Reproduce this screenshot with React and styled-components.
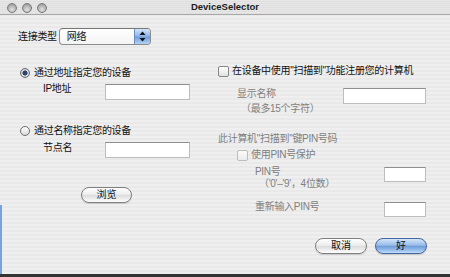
import styled, { createGlobalStyle } from 'styled-components';

const GlobalStyle = createGlobalStyle`
  html, body {
    margin: 0;
    padding: 0;
  }
  body {
    background: #6f9bd6;
    font-family: "Liberation Sans", "Noto Sans CJK SC", sans-serif;
  }
`;

const Window = styled.div`
  width: 450px;
  height: 277px;
  box-sizing: border-box;
  display: flex;
  flex-direction: column;
  overflow: hidden;
  border-bottom: 3px solid #343434;
  background:
    linear-gradient(to bottom, transparent 75%, #78a2da 75%) left top / 2px 100% no-repeat,
    repeating-linear-gradient(to bottom, #efefef 0 2px, #e9e9e9 2px 4px);
`;

const TitleBar = styled.div`
  flex: none;
  height: 14px;
  display: grid;
  grid-template-columns: 1fr auto 1fr;
  align-items: center;
  background: repeating-linear-gradient(to bottom, #e7e7e7 0 1px, #dfdfdf 1px 2px);
  border-bottom: 1px solid #a9a9a9;
`;

const Lights = styled.div`
  display: flex;
  gap: 5px;
  padding-left: 7px;
  padding-top: 2px;
`;

const Light = styled.span`
  width: 10px;
  height: 10px;
  box-sizing: border-box;
  border-radius: 50%;
  border: 1px solid #7a7a7a;
  background: radial-gradient(circle at 50% 70%, #e2e2e2 0, #b3b3b3 55%, #8d8d8d 100%);
`;

const Title = styled.div`
  font-family: "Liberation Sans", sans-serif;
  font-weight: bold;
  font-size: 9.5px;
  line-height: 14px;
  color: #1c1c1c;
`;

const Content = styled.div`
  flex: 1;
  padding: 13px 23px 0 18px;
  display: flex;
  flex-direction: column;
  font-size: 10px;
  letter-spacing: -0.3px;
  color: #111;
`;

const TopRow = styled.div`
  display: flex;
  align-items: center;
  gap: 2px;
  height: 17px;
`;

const Label = styled.span`
  line-height: 12px;
  white-space: nowrap;
  color: ${(p) => (p.$disabled ? '#808080' : '#111')};
`;

const Popup = styled.div`
  width: 92px;
  height: 17px;
  box-sizing: border-box;
  display: flex;
  border: 1px solid #8c8c8c;
  border-top-color: #777;
  border-radius: 4px;
  overflow: hidden;
  background: linear-gradient(to bottom, #ffffff, #f4f4f4);
`;

const PopupValue = styled.span`
  flex: 1;
  padding-left: 7px;
  line-height: 15px;
`;

const Stepper = styled.span`
  width: 15px;
  display: flex;
  align-items: center;
  justify-content: center;
  border-left: 1px solid #6b8cc2;
  background: linear-gradient(to bottom, #d2e4f8 0, #8fb5e7 48%, #6d9bda 52%, #b4d3f5 100%);
`;

const Columns = styled.div`
  display: grid;
  grid-template-columns: 200px 208px;
  margin-top: 18px;
`;

const Column = styled.div`
  display: flex;
  flex-direction: column;
  align-items: flex-start;
  padding-top: ${(p) => p.$pt}px;
`;

const ChoiceRow = styled.div`
  display: flex;
  align-items: center;
  gap: ${(p) => p.$gap ?? 4}px;
  height: 14px;
  margin-top: ${(p) => p.$mt ?? 0}px;
  margin-left: ${(p) => p.$ml ?? 0}px;
`;

const Radio = styled.span`
  width: 10px;
  height: 10px;
  box-sizing: border-box;
  border-radius: 50%;
  border: 1px solid #6e6e6e;
  background: ${(p) =>
    p.$checked
      ? 'radial-gradient(circle, #2f4266 0 2.3px, #dfe4ec 2.8px 3.2px, #aab2bf 4.2px)'
      : 'linear-gradient(to bottom, #ffffff, #d9d9d9)'};
`;

const Checkbox = styled.span`
  width: 11px;
  height: 11px;
  box-sizing: border-box;
  border-radius: 2px;
  border: 1px solid ${(p) => (p.$disabled ? '#bdbdbd' : '#858585')};
  background: ${(p) =>
    p.$disabled
      ? 'linear-gradient(to bottom, #fbfbfb, #ececec)'
      : 'linear-gradient(to bottom, #ffffff, #e1e1e1)'};
`;

const FieldRow = styled.div`
  display: flex;
  align-items: flex-start;
  align-self: stretch;
  margin-top: ${(p) => p.$mt}px;
  margin-left: ${(p) => p.$ml}px;
`;

const FieldLabel = styled.div`
  flex: ${(p) => (p.$w ? 'none' : '1')};
  width: ${(p) => (p.$w ? `${p.$w}px` : 'auto')};
  margin-top: ${(p) => p.$mt ?? 0}px;
  line-height: ${(p) => p.$lh ?? 12}px;
  white-space: nowrap;
  color: ${(p) => (p.$disabled ? '#808080' : '#111')};
`;

const SubLine = styled.div`
  padding-left: 4px;
`;

const TextBox = styled.div`
  flex: none;
  width: ${(p) => p.$w}px;
  height: ${(p) => p.$h}px;
  margin-top: ${(p) => p.$mt ?? 0}px;
  box-sizing: border-box;
  background: #fff;
  border: 1px solid #bdbdbd;
  border-top-color: #8e8e8e;
`;

const Heading = styled.div`
  margin-top: 17px;
  line-height: 12px;
  color: #808080;
  white-space: nowrap;
`;

const AquaButton = styled.button`
  width: ${(p) => p.$w}px;
  height: 16px;
  margin: ${(p) => p.$margin ?? '0'};
  padding: 0;
  box-sizing: border-box;
  border-radius: 8px;
  font-family: "Liberation Sans", "Noto Sans CJK SC", sans-serif;
  font-size: 10px;
  line-height: 14px;
  color: #111;
  border: 1px solid ${(p) => (p.$primary ? '#43679c' : '#7f7f7f')};
  background: ${(p) =>
    p.$primary
      ? 'linear-gradient(to bottom, #d4e5f8 0, #98bbe9 45%, #6f9bd8 52%, #9fc5f0 85%, #c6def8 100%)'
      : 'linear-gradient(to bottom, #ffffff 0, #eeeeee 45%, #dcdcdc 52%, #f2f2f2 85%, #ffffff 100%)'};
  box-shadow: 0 1px 1px rgba(0, 0, 0, 0.15);
`;

const Footer = styled.div`
  display: flex;
  justify-content: flex-end;
  gap: 8px;
  margin-top: 21px;
`;

function StepperArrows() {
  return (
    <svg width="7" height="11" viewBox="0 0 7 11">
      <path d="M3.5 0.5 L6.5 4 H0.5 Z" fill="#111" />
      <path d="M3.5 10.5 L6.5 7 H0.5 Z" fill="#111" />
    </svg>
  );
}

export default function App() {
  return (
    <>
      <GlobalStyle />
      <Window>
        <TitleBar>
          <Lights>
            <Light />
            <Light />
            <Light />
          </Lights>
          <Title>DeviceSelector</Title>
          <span />
        </TitleBar>

        <Content>
          <TopRow>
            <Label>连接类型</Label>
            <Popup>
              <PopupValue>网络</PopupValue>
              <Stepper>
                <StepperArrows />
              </Stepper>
            </Popup>
          </TopRow>

          <Columns>
            <Column $pt={3}>
              <ChoiceRow $ml={2}>
                <Radio $checked />
                <Label>通过地址指定您的设备</Label>
              </ChoiceRow>
              <FieldRow $mt={4} $ml={25}>
                <FieldLabel $w={62} $mt={-1}>IP地址</FieldLabel>
                <TextBox $w={85} $h={16} />
              </FieldRow>

              <ChoiceRow $ml={2} $mt={24}>
                <Radio />
                <Label>通过名称指定您的设备</Label>
              </ChoiceRow>
              <FieldRow $mt={4} $ml={25}>
                <FieldLabel $w={62}>节点名</FieldLabel>
                <TextBox $w={85} $h={16} />
              </FieldRow>

              <AquaButton $w={51} $margin="29px 0 0 63px">浏览</AquaButton>
            </Column>

            <Column $pt={1}>
              <ChoiceRow $gap={3}>
                <Checkbox />
                <Label>在设备中使用"扫描到"功能注册您的计算机</Label>
              </ChoiceRow>
              <FieldRow $mt={8} $ml={19}>
                <FieldLabel $disabled $lh={15}>
                  显示名称
                  <SubLine>（最多15个字符）</SubLine>
                </FieldLabel>
                <TextBox $w={83} $h={16} $mt={2} />
              </FieldRow>

              <Heading>此计算机"扫描到"键PIN号码</Heading>
              <ChoiceRow $gap={3} $mt={3} $ml={19}>
                <Checkbox $disabled />
                <Label $disabled>使用PIN号保护</Label>
              </ChoiceRow>
              <FieldRow $mt={4} $ml={37}>
                <FieldLabel $disabled>
                  PIN号
                  <SubLine>（'0'–'9'，4位数）</SubLine>
                </FieldLabel>
                <TextBox $w={42} $h={15} $mt={1} />
              </FieldRow>
              <FieldRow $mt={11} $ml={37}>
                <FieldLabel $disabled>重新输入PIN号</FieldLabel>
                <TextBox $w={42} $h={15} $mt={1} />
              </FieldRow>
            </Column>
          </Columns>

          <Footer>
            <AquaButton $w={52}>取消</AquaButton>
            <AquaButton $w={52} $primary>好</AquaButton>
          </Footer>
        </Content>
      </Window>
    </>
  );
}
